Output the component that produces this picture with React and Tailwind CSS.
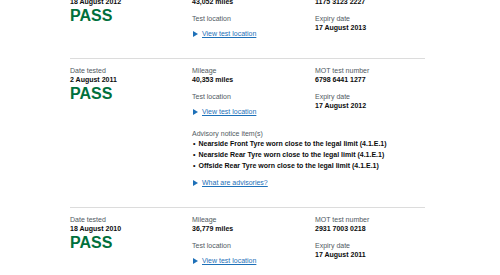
import React from "react";

const tests = [
  {
    date: "18 August 2012",
    mileage: "43,052 miles",
    number: "1175 3123 2227",
    expiry: "17 August 2013",
  },
  {
    date: "2 August 2011",
    mileage: "40,353 miles",
    number: "6798 6441 1277",
    expiry: "17 August 2012",
    advisories: [
      "Nearside Front Tyre worn close to the legal limit (4.1.E.1)",
      "Nearside Rear Tyre worn close to the legal limit (4.1.E.1)",
      "Offside Rear Tyre worn close to the legal limit (4.1.E.1)",
    ],
  },
  {
    date: "18 August 2010",
    mileage: "36,779 miles",
    number: "2931 7003 0218",
    expiry: "17 August 2011",
  },
];

const Label = ({ children, className = "" }) => (
  <div className={`text-[7px] leading-[9px] text-[#505a5f] ${className}`}>{children}</div>
);

const Value = ({ children }) => (
  <div className="text-[7px] leading-[9px] font-bold text-[#0b0c0c]">{children}</div>
);

const DetailsLink = ({ children, className = "" }) => (
  <div className={`flex items-center gap-[4px] pl-[1px] text-[7px] leading-[9px] ${className}`}>
    <svg width="5" height="6" viewBox="0 0 5 6" className="shrink-0">
      <path d="M0 0 L5 3 L0 6 Z" fill="#1d70b8" />
    </svg>
    <span className="text-[#1d70b8] underline">{children}</span>
  </div>
);

const TestResult = ({ test }) => (
  <section className="grid grid-cols-[122px_123px_110px] border-b border-[#dcdcdc] pt-[7px] pb-[20px]">
    {/* Date and result */}
    <div>
      <Label>Date tested</Label>
      <Value>{test.date}</Value>
      <div className="mt-[2px] text-[16px] leading-[16px] font-bold text-[#00703c]">PASS</div>
    </div>

    {/* Mileage and location */}
    <div>
      <Label>Mileage</Label>
      <Value>{test.mileage}</Value>
      <Label className="mt-[8px]">Test location</Label>
      <DetailsLink className="mt-[6px]">View test location</DetailsLink>
    </div>

    {/* Test number and expiry */}
    <div>
      <Label>MOT test number</Label>
      <Value>{test.number}</Value>
      <Label className="mt-[8px]">Expiry date</Label>
      <Value>{test.expiry}</Value>
    </div>

    {test.advisories && (
      <div className="col-start-2 col-span-2 mt-[13px]">
        <Label>Advisory notice item(s)</Label>
        <ul>
          {test.advisories.map((item) => (
            <li
              key={item}
              className="flex gap-[3px] pl-[1px] text-[7px] leading-[11px] font-bold text-[#0b0c0c]"
            >
              <span>•</span>
              <span>{item}</span>
            </li>
          ))}
        </ul>
        <DetailsLink className="mt-[7px]">What are advisories?</DetailsLink>
      </div>
    )}
  </section>
);

export default function App() {
  return (
    <div
      className="h-[275px] w-[500px] overflow-hidden bg-white"
      style={{ fontFamily: '"Liberation Sans", Arial, sans-serif' }}
    >
      <div className="-mt-[19px] ml-[70px] w-[355px]">
        {tests.map((t) => (
          <TestResult key={t.number} test={t} />
        ))}
      </div>
    </div>
  );
}
